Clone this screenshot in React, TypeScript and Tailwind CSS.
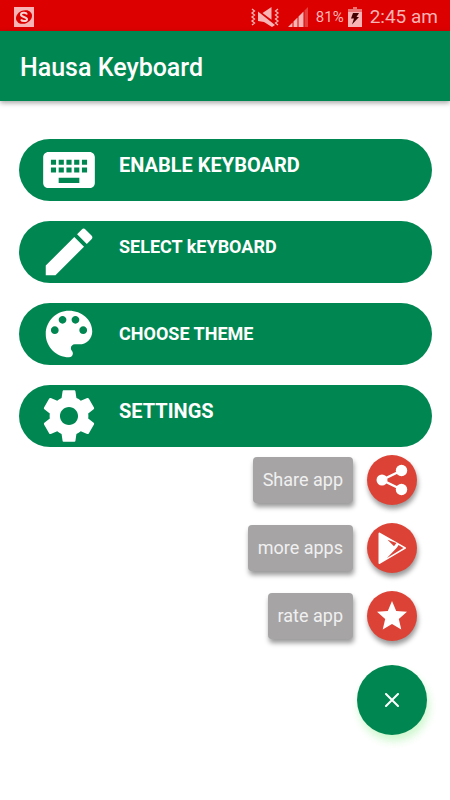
import { MdKeyboard, MdEdit, MdStar } from 'react-icons/md';

interface IconProps {
  className?: string;
}

function PaletteIcon({ className }: IconProps) {
  return (
    <svg viewBox="0 0 24 24" fill="currentColor" className={className}>
      <path d="M12 3c-4.97 0-9 4.03-9 9s4.03 9 9 9c.83 0 1.5-.67 1.5-1.5 0-.39-.15-.74-.39-1.01-.23-.26-.38-.61-.38-.99 0-.83.67-1.5 1.5-1.5H16c2.76 0 5-2.24 5-5 0-4.42-4.03-8-9-8zm-5.5 9c-.83 0-1.5-.67-1.5-1.5S5.67 9 6.5 9 8 9.67 8 10.5 7.33 12 6.5 12zm3-4C8.67 8 8 7.33 8 6.5S8.67 5 9.5 5s1.5.67 1.5 1.5S10.33 8 9.5 8zm5 0c-.83 0-1.5-.67-1.5-1.5S13.67 5 14.5 5s1.5.67 1.5 1.5S15.33 8 14.5 8zm3 4c-.83 0-1.5-.67-1.5-1.5S16.67 9 17.5 9s1.5.67 1.5 1.5-.67 1.5-1.5 1.5z" />
    </svg>
  );
}

function SettingsIcon({ className }: IconProps) {
  return (
    <svg viewBox="0 0 24 24" fill="currentColor" className={className}>
      <path d="M19.43 12.98c.04-.32.07-.64.07-.98s-.03-.66-.07-.98l2.11-1.65c.19-.15.24-.42.12-.64l-2-3.46c-.12-.22-.39-.3-.61-.22l-2.49 1c-.52-.4-1.08-.73-1.69-.98l-.38-2.65C14.46 2.18 14.25 2 14 2h-4c-.25 0-.46.18-.49.42l-.38 2.65c-.61.25-1.17.59-1.69.98l-2.49-1c-.23-.09-.49 0-.61.22l-2 3.46c-.13.22-.07.49.12.64l2.11 1.65c-.04.32-.07.65-.07.98s.03.66.07.98l-2.11 1.65c-.19.15-.24.42-.12.64l2 3.46c.12.22.39.3.61.22l2.49-1c.52.4 1.08.73 1.69.98l.38 2.65c.03.24.24.42.49.42h4c.25 0 .46-.18.49-.42l.38-2.65c.61-.25 1.17-.59 1.69-.98l2.49 1c.23.09.49 0 .61-.22l2-3.46c.12-.22.07-.49-.12-.64l-2.11-1.65zM12 15.5c-1.93 0-3.5-1.57-3.5-3.5s1.57-3.5 3.5-3.5 3.5 1.57 3.5 3.5-1.57 3.5-3.5 3.5z" />
    </svg>
  );
}

function ShareIcon({ className }: IconProps) {
  return (
    <svg viewBox="-18 -18 36 36" fill="currentColor" className={className}>
      <path d="M9.5-9.5L-10 0L9.5 9.5" fill="none" stroke="currentColor" strokeWidth="2.5" />
      <circle cx="-10" cy="0" r="5.5" />
      <circle cx="9.5" cy="-9.5" r="5.7" />
      <circle cx="9.5" cy="9.5" r="5.7" />
    </svg>
  );
}

function PlayIcon({ className }: IconProps) {
  return (
    <svg viewBox="-3 -2 36 36" className={className}>
      <path d="M2.5 1.5L28 16L2.5 31Z" fill="white" stroke="white" strokeWidth="2" strokeLinejoin="round" />
      <path d="M10.5 7.8L19.5 11L17 14.2ZM21.5 13L26.5 16L10 26L20 15.5Z" fill="#dc4336" />
    </svg>
  );
}

function MuteVibrateIcon() {
  return (
    <svg viewBox="0 0 30 20" className="w-[30px] h-5" fill="#f8b4b4">
      <path
        d="M2 2l2.5 2-2.5 2 2.5 2-2.5 2 2.5 2-2.5 2 2.5 2-2.5 2M28 2l-2.5 2 2.5 2-2.5 2 2.5 2-2.5 2 2.5 2-2.5 2 2.5 2"
        fill="none"
        stroke="#f8b4b4"
        strokeWidth="1.3"
      />
      <path d="M8 4.5L25 18L22 20L14 15L8 14ZM12.5 6L21.5 0V12.8Z" />
    </svg>
  );
}

function SignalIcon() {
  return (
    <svg viewBox="0 0 20 20" className="w-5 h-5" fill="#f8b4b4">
      <path d="M0 20l4.5-4.5V20zM5.5 14.5L9.5 10.5V20H5.5zM10.5 9.5L15.5 4.5V20h-5z" />
      <path d="M16.5 3.5L20 0v20h-3.5z" opacity="0.35" />
    </svg>
  );
}

function BatteryIcon() {
  return (
    <svg viewBox="0 0 14 20" className="w-[14px] h-5">
      <path d="M5 0h4v2h5v4H0V2h5z" fill="#ea7474" />
      <path d="M0 5h14v15H0z" fill="#f8b4b4" />
      <path d="M5 6h6l-2.5 4H11l-7 7.5 2-6H3z" fill="#400" />
    </svg>
  );
}

const MENU_ITEMS = [
  { label: 'ENABLE KEYBOARD', icon: MdKeyboard, text: 'text-xl pb-[10px]' },
  { label: 'SELECT kEYBOARD', icon: MdEdit, text: 'text-lg pb-[10px]' },
  { label: 'CHOOSE THEME', icon: PaletteIcon, text: 'text-lg' },
  { label: 'SETTINGS', icon: SettingsIcon, text: 'text-xl pb-[10px]' },
];

const ACTIONS = [
  { label: 'Share app', icon: ShareIcon },
  { label: 'more apps', icon: PlayIcon },
  { label: 'rate app', icon: MdStar },
];

export default function App() {
  return (
    <div className="min-h-screen bg-white font-['Roboto',sans-serif]">
      {/* Status bar */}
      <div className="flex items-center justify-between h-[31px] bg-[#dc0000] pl-[14px] pr-3 pt-[3px] text-[#f8b4b4]">
        <svg viewBox="0 0 20 20" className="w-5 h-5">
          <rect width="20" height="20" fill="#f8b4b4" />
          <ellipse cx="10" cy="10" rx="8.3" ry="6.5" fill="#dc0000" transform="rotate(-25 10 10)" />
          <path d="M13 7.5c-1-2.5-6-2-6 .3s6 2 6 4.4-5 2.5-6 .3" fill="none" stroke="#f8d4d4" strokeWidth="2" />
        </svg>
        <div className="flex items-center">
          <MuteVibrateIcon />
          <div className="ml-2">
            <SignalIcon />
          </div>
          <span className="ml-2 mr-1 text-[15px]">81%</span>
          <BatteryIcon />
          <span className="ml-2 text-[19px]">2:45 am</span>
        </div>
      </div>

      {/* App bar */}
      <header className="relative flex items-center h-[70px] bg-[#008751] px-5 pt-1 shadow-[0_2px_5px_rgba(0,0,0,0.35)]">
        <h1 className="text-[25px] font-medium text-white">Hausa Keyboard</h1>
      </header>

      <main className="pt-[38px]">
        <div className="flex flex-col gap-5 pl-[19px] pr-[18px]">
          {MENU_ITEMS.map(({ label, icon: Icon, text }) => (
            <button
              key={label}
              type="button"
              className="flex items-center gap-[19px] h-[62px] rounded-full bg-[#008751] pl-[19px] text-white"
            >
              <Icon className="w-[62px] h-[62px]" />
              <span className={`font-bold ${text}`}>{label}</span>
            </button>
          ))}
        </div>

        {/* Floating actions */}
        <div className="flex flex-col items-end gap-[18px] mt-2 pr-[33px]">
          {ACTIONS.map(({ label, icon: Icon }) => (
            <button key={label} type="button" className="flex items-center gap-[14px]">
              <span className="flex items-center h-[46px] px-[10px] rounded-sm bg-[#a6a4a5] text-lg text-[#f0f0f0] shadow-[1px_4px_5px_rgba(0,0,0,0.4)]">
                {label}
              </span>
              <span className="flex items-center justify-center w-[50px] h-[50px] rounded-full bg-[#dc4336] text-white shadow-[1px_4px_5px_rgba(0,0,0,0.4)]">
                <Icon className="w-9 h-9" />
              </span>
            </button>
          ))}
        </div>

        <div className="flex justify-end mt-6 pr-[23px]">
          <button
            type="button"
            aria-label="Close menu"
            className="flex items-center justify-center w-[70px] h-[70px] rounded-full bg-[#008751] shadow-[2px_6px_9px_rgba(144,238,144,0.45)]"
          >
            <svg viewBox="0 0 14 14" className="w-[14px] h-[14px]" stroke="white" strokeWidth="2" strokeLinecap="round">
              <path d="M1 1l12 12M13 1L1 13" />
            </svg>
          </button>
        </div>
      </main>
    </div>
  );
}
